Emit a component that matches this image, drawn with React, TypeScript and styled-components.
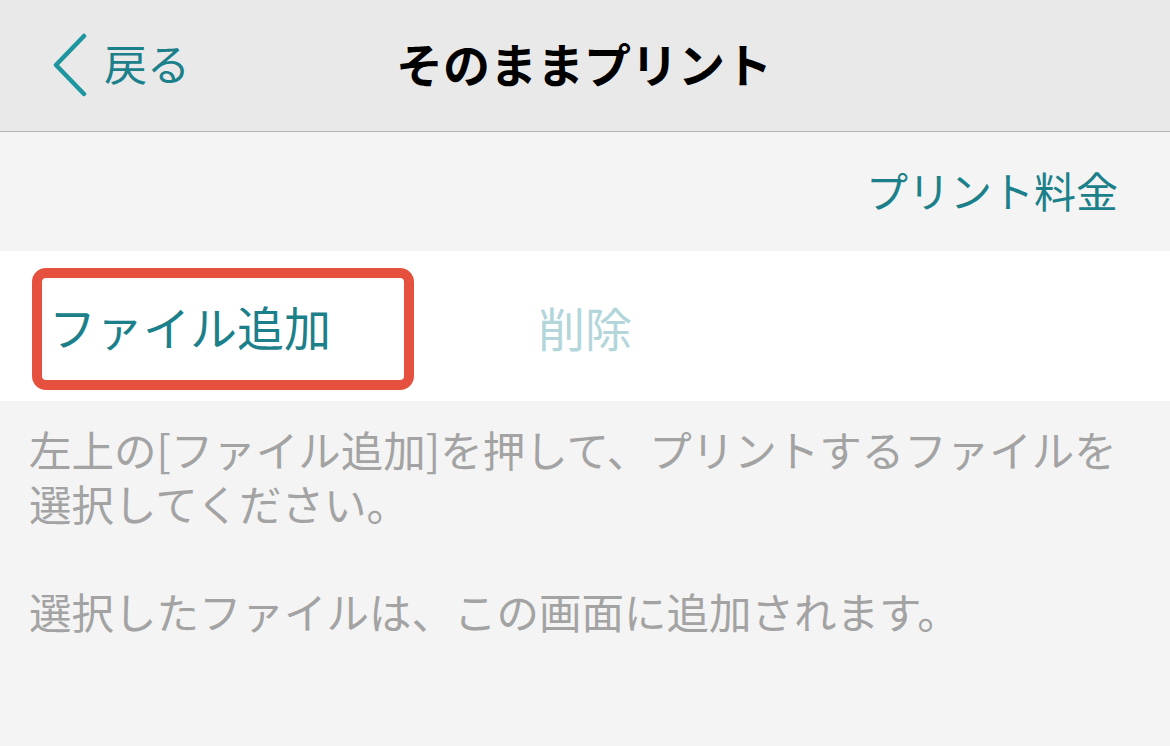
import React from "react";
import styled, { createGlobalStyle } from "styled-components";

const Global = createGlobalStyle`
  html, body { margin: 0; padding: 0; background: #f4f4f4; }
  body { font-family: "Noto Sans CJK JP", "Noto Sans", sans-serif; }
`;

const Page = styled.div`
  width: 1170px;
  height: 746px;
  background: #f4f4f4;
  display: flex;
  flex-direction: column;
  overflow: hidden;
`;

const NavBar = styled.header`
  background: #e9e9e9;
  border-bottom: 1px solid #b4b4b4;
  display: grid;
  grid-template-columns: 1fr auto 1fr;
  align-items: center;
  box-sizing: border-box;
  height: 132px;
`;

const BackButton = styled.div`
  display: flex;
  align-items: center;
  gap: 16px;
  padding-left: 52px;
  color: #1b8089;
  font-size: 43px;
  line-height: 1;
  padding-bottom: 2px;
`;

const BackLabel = styled.span`
  padding-bottom: 4px;
`;

const Title = styled.h1`
  margin: 0;
  font-size: 47px;
  font-weight: 700;
  color: #000;
  line-height: 1;
  padding-bottom: 6px;
  transform: translateX(-1px);
`;

const PriceBar = styled.div`
  height: 119px;
  display: flex;
  justify-content: flex-end;
  align-items: center;
  padding-right: 52px;
  padding-bottom: 3px;
  box-sizing: border-box;
`;

const LinkText = styled.span`
  color: #1b8089;
  font-size: 42px;
  line-height: 1;
`;

const ActionRow = styled.div`
  height: 150px;
  background: #fff;
  display: flex;
  align-items: center;
  padding-left: 32px;
`;

const Highlight = styled.div`
  width: 382px;
  height: 122px;
  box-sizing: border-box;
  border: 10px solid #e5503f;
  border-radius: 14px;
  display: flex;
  align-items: center;
  padding-left: 7px;
  padding-bottom: 8px;
  margin-top: 6px;
`;

const ActionButton = styled.span<{ $disabled?: boolean }>`
  font-size: 47px;
  line-height: 1;
  color: ${(p) => (p.$disabled ? "#b3d6db" : "#1b8089")};
  margin-left: ${(p) => (p.$disabled ? "124px" : "0")};
`;

const Help = styled.div`
  padding: 21px 0 0 29px;
  color: #a3a3a3;
  font-size: 42.5px;
  line-height: 54px;
`;

const Para = styled.p`
  margin: 0 0 54px 0;
`;

const Chevron = () => (
  <svg width="36" height="64" viewBox="0 0 36 64">
    <path
      d="M32 3 L4 32 L32 61"
      fill="none"
      stroke="#1e96a0"
      strokeWidth="4.5"
      strokeLinecap="round"
      strokeLinejoin="round"
    />
  </svg>
);

export default function App() {
  return (
    <Page>
      <Global />
      <NavBar>
        <BackButton>
          <Chevron />
          <BackLabel>戻る</BackLabel>
        </BackButton>
        <Title>そのままプリント</Title>
        <div />
      </NavBar>
      <PriceBar>
        <LinkText>プリント料金</LinkText>
      </PriceBar>
      <ActionRow>
        <Highlight>
          <ActionButton>ファイル追加</ActionButton>
        </Highlight>
        <ActionButton $disabled>削除</ActionButton>
      </ActionRow>
      <Help>
        <Para>
          左上の[ファイル追加]を押して、プリントするファイルを
          <br />
          選択してください。
        </Para>
        <Para>選択したファイルは、この画面に追加されます。</Para>
      </Help>
    </Page>
  );
}
